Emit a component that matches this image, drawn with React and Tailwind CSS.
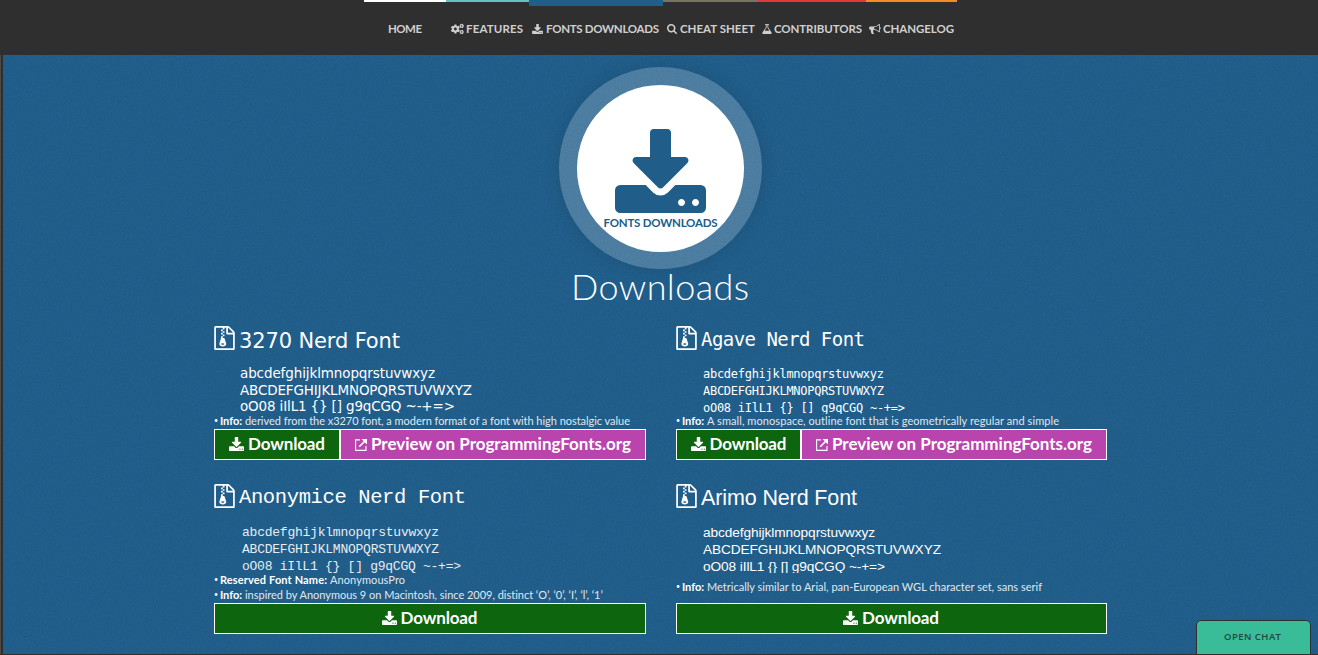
import React, { useLayoutEffect, useRef } from "react";
import { FaCogs } from "react-icons/fa";

const glyphs = {
  download:
    "M1344 1344q0-26-19-45t-45-19-45 19-19 45 19 45 45 19 45-19 19-45zm256 0q0-26-19-45t-45-19-45 19-19 45 19 45 45 19 45-19 19-45zm128-224v320q0 40-28 68t-68 28h-1472q-40 0-68-28t-28-68v-320q0-40 28-68t68-28h465l135 136q58 56 136 56t136-56l136-136h464q40 0 68 28t28 68zm-325-569q17 41-14 70l-448 448q-18 19-45 19t-45-19l-448-448q-31-29-14-70 17-39 59-39h256v-448q0-26 19-45t45-19h256q26 0 45 19t19 45v448h256q42 0 59 39z",
  search:
    "M1216 832q0-185-131.5-316.5t-316.5-131.5-316.5 131.5-131.5 316.5 131.5 316.5 316.5 131.5 316.5-131.5 131.5-316.5zm512 832q0 52-38 90t-90 38q-54 0-90-38l-343-342q-179 124-399 124-143 0-273.5-55.5t-225-150-150-225-55.5-273.5 55.5-273.5 150-225 225-150 273.5-55.5 273.5 55.5 225 150 150 225 55.5 273.5q0 220-124 399l343 343q37 37 37 90z",
  flask:
    "M1591 1448q56 89 21.5 152.5t-140.5 63.5h-1152q-106 0-140.5-63.5t21.5-152.5l503-793v-399h-64q-26 0-45-19t-19-45 19-45 45-19h512q26 0 45 19t19 45-19 45-45 19h-64v399zm-779-725l-272 429h712l-272-429-20-31v-436h-128v436z",
  bullhorn:
    "M1664 640q53 0 90.5 37.5t37.5 90.5-37.5 90.5-90.5 37.5v384q0 52-38 90t-90 38q-417-347-812-380-58 19-91 66t-31 100.5 40 92.5q-20 33-23 65.5t6 58 33.5 55 48 50 61.5 50.5q-29 58-111.5 83t-168.5 11.5-132-55.5q-7-23-29.5-87.5t-32-94.5-23-89-15-101 3.5-98.5 22-110.5h-122q-66 0-113-47t-47-113v-192q0-66 47-113t113-47h480q435 0 896-384 52 0 90 38t38 90v384zm-128 604v-954q-394 302-768 343v270q377 42 768 341z",
  archive:
    "M768 384v-128h-128v128h128zm128 128v-128h-128v128h128zm-128 128v-128h-128v128h128zm128 128v-128h-128v128h128zm700-388q28 28 48 76t20 88v1152q0 40-28 68t-68 28h-1344q-40 0-68-28t-28-68v-1600q0-40 28-68t68-28h896q40 0 88 20t76 48zm-444-244v376h376q-10-29-22-41l-313-313q-12-12-41-22zm384 1528v-1024h-416q-40 0-68-28t-28-68v-416h-128v128h-128v-128h-512v1536h1280zm-627-721l107 349q8 27 8 52 0 83-72.5 137.5t-183.5 54.5-183.5-54.5-72.5-137.5q0-25 8-52 21-63 120-396v-128h128v128h79q22 0 39 13t23 34zm-141 465q53 0 90.5-19t37.5-45-37.5-45-90.5-19-90.5 19-37.5 45 37.5 45 90.5 19z",
};

function Glyph({ name, box = "0 0 1792 1792", className }) {
  return (
    <svg viewBox={box} fill="currentColor" className={className}>
      <path d={glyphs[name]} />
    </svg>
  );
}

function PreviewIcon() {
  return (
    <svg viewBox="0 0 12 12" fill="none" stroke="currentColor" className="h-3 w-3 shrink-0">
      <path d="M5 .9H.6V11.4H11V7" strokeWidth="1.1" />
      <path d="M4.2 7.8L9.5 2.5" strokeWidth="1.6" />
      <path d="M6.4 0H12V5.6Z" fill="currentColor" stroke="none" />
    </svg>
  );
}

/* Spreads its text evenly so that the line fills the given width. */
function Fit({ w, className = "", children }) {
  const ref = useRef(null);
  useLayoutEffect(() => {
    const el = ref.current;
    el.style.letterSpacing = "0px";
    const natural = el.getBoundingClientRect().width;
    el.style.letterSpacing = `${(w - natural) / Math.max(1, el.textContent.length - 1)}px`;
  }, [w]);
  return (
    <span className={`block shrink-0 whitespace-pre ${className}`} style={{ width: w }}>
      <span ref={ref} className="inline-block whitespace-pre">
        {children}
      </span>
    </span>
  );
}

function NavItem({ bar, children }) {
  return (
    <a className="relative block h-[55px]">
      <span className={`block w-full ${bar}`} />
      <span className="absolute inset-x-0 top-[21px] flex h-4 items-center">{children}</span>
    </a>
  );
}

function Nav() {
  return (
    <header className="h-[55px] bg-[#2f2f2f] pl-[364px] text-[11.5px] leading-4 font-bold text-[#cfcfcf]">
      <nav className="grid grid-cols-[82px_83px_134px_95px_108px_91px]">
        <NavItem bar="h-0.5 bg-white">
          <Fit w={34} className="ml-6">HOME</Fit>
        </NavItem>
        <NavItem bar="h-0.5 bg-[#63c1c6]">
          <FaCogs className="ml-[5px] h-[12px] w-[13px] shrink-0" />
          <Fit w={57} className="ml-0.5">FEATURES</Fit>
        </NavItem>
        <NavItem bar="h-1.5 bg-[#205e8b]">
          <Glyph name="download" box="64 0 1664 1536" className="ml-[3px] h-[10px] w-[11px] shrink-0" />
          <Fit w={113} className="ml-[3px]">FONTS DOWNLOADS</Fit>
        </NavItem>
        <NavItem bar="h-0.5 bg-[#77745f]">
          <Glyph name="search" box="64 128 1664 1664" className="ml-1 h-[10px] w-[10px] shrink-0" />
          <Fit w={75} className="ml-[3px]">CHEAT SHEET</Fit>
        </NavItem>
        <NavItem bar="h-0.5 bg-[#de3a3a]">
          <Glyph name="flask" box="128 128 1536 1536" className="ml-1 h-[10px] w-[10px] shrink-0" />
          <Fit w={88} className="ml-0.5">CONTRIBUTORS</Fit>
        </NavItem>
        <NavItem bar="h-0.5 bg-[#f58b22]">
          <Glyph name="bullhorn" box="0 128 1792 1536" className="ml-[3px] h-[10px] w-[12px] shrink-0" />
          <Fit w={71} className="ml-0.5">CHANGELOG</Fit>
        </NavItem>
      </nav>
    </header>
  );
}

function Card({ title, titleW, titleCls, iconCls = "", sampleCls, lines, widths, notes, notesCls, preview }) {
  return (
    <article>
      <div className="flex h-[45px] pt-[6px]">
        <Glyph name="archive" box="128 0 1536 1792" className={`h-6 w-[21px] shrink-0 ${iconCls}`} />
        <Fit w={titleW} className={titleCls}>{title}</Fit>
      </div>
      <div className={`h-[49px] overflow-hidden ${sampleCls}`}>
        {lines.map((line, i) => (
          <Fit key={line} w={widths[i]}>{line}</Fit>
        ))}
      </div>
      <ul className={`flex flex-col justify-center text-[11px] leading-[13px] ${notesCls}`}>
        {notes.map(([label, text, lw, tw]) => (
          <li key={label} className="flex h-[15px]">
            <span className="w-[6px] shrink-0 text-[7px]">•</span>
            <Fit w={lw} className="font-bold">{label}</Fit>
            <Fit w={tw} className="ml-[3px] text-[#e0e8ee]">{text}</Fit>
          </li>
        ))}
      </ul>
      <div className="flex h-[31px] border border-white text-[17px] leading-[28px] font-bold">
        <a className={`flex justify-center bg-[#0d650d] ${preview ? `${preview} border-r-2 border-white` : "w-full pr-px"}`}>
          <Glyph name="download" box="64 0 1664 1536" className="mt-[7px] h-[14px] w-[15px] shrink-0" />
          <Fit w={77} className="ml-1">Download</Fit>
        </a>
        {preview && (
          <a className="flex flex-1 bg-[#b944ad] pl-[14px]">
            <span className="mt-[9px]"><PreviewIcon /></span>
            <Fit w={260} className="ml-1">Preview on ProgrammingFonts.org</Fit>
          </a>
        )}
      </div>
    </article>
  );
}

const lower = "abcdefghijklmnopqrstuvwxyz";
const upper = "ABCDEFGHIJKLMNOPQRSTUVWXYZ";
const mixed = "oO08 iIlL1 {} [] g9qCGQ ~-+=>";

const cards = [
  {
    title: "3270 Nerd Font", titleW: 161, preview: "w-[126px]",
    titleCls: "ml-1 mt-[3px] text-[21px] leading-6 font-['DejaVu_Sans',sans-serif]",
    sampleCls: "pl-[26px] text-[13.5px] leading-[16.5px] font-['DejaVu_Sans',sans-serif]",
    widths: [195, 232, 215], notesCls: "h-[15px]",
    notes: [["Info:", "derived from the x3270 font, a modern format of a font with high nostalgic value", 22, 385]],
  },
  {
    title: "Agave Nerd Font", titleW: 164, preview: "w-[125px]",
    titleCls: "ml-1 mt-px text-[19px] leading-6 font-['DejaVu_Sans_Mono',monospace]",
    sampleCls: "pl-[27px] pt-px text-[12px] leading-[17px] font-['DejaVu_Sans_Mono',monospace]",
    widths: [181, 181, 202], notesCls: "h-[15px]",
    notes: [["Info:", "A small, monospace, outline font that is geometrically regular and simple", 22, 352]],
  },
  {
    title: "Anonymice Nerd Font", titleW: 227, iconCls: "-mt-px",
    titleCls: "ml-1 mt-px text-[20.5px] leading-6 font-['Liberation_Mono',monospace]",
    sampleCls: "pl-[28px] text-[13px] leading-[17px] text-[#e6edf2] font-['Liberation_Mono',monospace]",
    widths: [197, 197, 219], notesCls: "h-[30px]",
    notes: [
      ["Reserved Font Name:", "AnonymousPro", 107, 75],
      ["Info:", "inspired by Anonymous 9 on Macintosh, since 2009, distinct ‘O’, ‘0’, ‘I’, ‘l’, ‘1’", 22, 358],
    ],
  },
  {
    title: "Arimo Nerd Font", titleW: 156, iconCls: "-mt-px",
    titleCls: "ml-1 mt-px text-[21.5px] leading-6 font-['Liberation_Sans',sans-serif]",
    sampleCls: "pl-[27px] text-[13.7px] leading-[17px] font-['Liberation_Sans',sans-serif]",
    widths: [172, 238, 182], notesCls: "h-[30px] pb-0.5",
    notes: [["Info:", "Metrically similar to Arial, pan-European WGL character set, sans serif", 22, 335]],
  },
];

export default function App() {
  return (
    <div className="relative h-[655px] w-[1318px] overflow-hidden bg-[#1b5a88] font-[Lato,sans-serif] text-white">
      <svg className="absolute inset-0 h-full w-full opacity-[0.07]">
        <filter id="grain">
          <feTurbulence type="fractalNoise" baseFrequency="0.55" numOctaves="2" seed="4" />
          <feColorMatrix type="saturate" values="0" />
        </filter>
        <rect width="1318" height="655" filter="url(#grain)" />
      </svg>
      <div className="relative flex h-full flex-col border-b border-[#2f2f2f]">
        <Nav />
        <div className="flex flex-1">
          <div className="w-[3px] shrink-0 border-l border-[#4a4a4a] bg-[#2f2f2f]" />
          <main className="flex-1">
            <div className="mt-3 ml-[556px] flex h-[202px] w-[203px] rounded-full bg-white/20 p-[18px] pb-[17px] shadow-[0_0_18px_rgba(0,0,0,0.12)]">
              <div className="flex h-full w-full flex-col items-center rounded-full bg-white pt-[44px] text-[#205d89]">
                <Glyph name="download" box="64 0 1664 1536" className="h-[84px] w-[91px] shrink-0" />
                <Fit w={114} className="mt-0.5 text-[11.5px] leading-4 font-bold">FONTS DOWNLOADS</Fit>
              </div>
            </div>
            <h1 className="ml-[568px] h-[51px] text-[36px] leading-[34px] font-light">
              <Fit w={178}>Downloads</Fit>
            </h1>
            <section className="ml-[211px] grid grid-cols-[432px_431px] gap-x-[30px] gap-y-[19px]">
              {cards.map((c) => (
                <Card key={c.title} lines={[lower, upper, mixed]} {...c} />
              ))}
            </section>
          </main>
        </div>
      </div>
      <button className="absolute top-[620px] left-[1196px] h-[35px] w-[115px] rounded-t-[5px] border border-[#2f2f2f] bg-[#39bd99] pb-0.5 font-['Open_Sans',sans-serif] text-[9.5px] leading-4 font-semibold text-[#24463f]">
        <Fit w={57} className="ml-[27px] text-left">OPEN CHAT</Fit>
      </button>
    </div>
  );
}
